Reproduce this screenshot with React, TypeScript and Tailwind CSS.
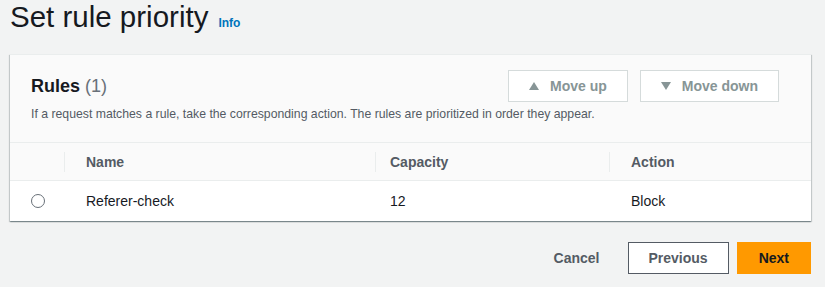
import React from "react";

const font = { fontFamily: '"Liberation Sans", Arial, sans-serif' };

function TriangleUp() {
    return (
        <svg width="10" height="8" viewBox="0 0 10 8" className="shrink-0">
            <polygon points="5,0 10,8 0,8" fill="currentColor" />
        </svg>
    );
}

function TriangleDown() {
    return (
        <svg width="10" height="8" viewBox="0 0 10 8" className="shrink-0">
            <polygon points="0,0 10,0 5,8" fill="currentColor" />
        </svg>
    );
}

function DisabledButton({ icon, label }: { icon: React.ReactNode; label: string }) {
    return (
        <button
            disabled
            className="flex h-8 items-center gap-[11px] border border-[#d5dbdb] bg-white px-[20px] text-sm font-bold leading-[18px] text-[#879596]"
        >
            {icon}
            <span>{label}</span>
        </button>
    );
}

const rules = [{ name: "Referer-check", capacity: 12, action: "Block" }];

export default function App() {
    return (
        <div className="min-h-[287px] w-full bg-[#f2f3f3] pl-[10px] pr-[14px] text-[#16191f]" style={font}>
            <div className="flex items-baseline">
                <h1 className="text-[29.5px] font-normal leading-[34px] text-[#16191f]">Set rule priority</h1>
                <a className="ml-[10px] text-xs font-bold text-[#0073bb]">Info</a>
            </div>

            <div className="mt-[20px] border-t border-[#eaeded] bg-white shadow-[0_1px_1px_0_rgba(0,28,36,0.3),1px_1px_1px_0_rgba(0,28,36,0.15),-1px_1px_1px_0_rgba(0,28,36,0.15)]">
                <div className="border-b border-[#eaeded] bg-[#fafafa] pb-[20px] pl-[21px] pr-[32px] pt-[15px]">
                    <div className="flex items-center justify-between">
                        <h2 className="text-lg font-bold leading-[22px]">
                            Rules <span className="font-normal text-[#687078]">(1)</span>
                        </h2>
                        <div className="flex gap-3">
                            <DisabledButton icon={<TriangleUp />} label="Move up" />
                            <DisabledButton icon={<TriangleDown />} label="Move down" />
                        </div>
                    </div>
                    <p className="mt-[4px] text-[12.25px] leading-4 text-[#545b64]">
                        If a request matches a rule, take the corresponding action. The rules are prioritized in order they appear.
                    </p>
                </div>

                <div className="grid grid-cols-[54px_311px_234px_1fr]">
                    <div className="h-[38px] border-b border-[#eaeded] bg-[#fafafa]" />
                    {["Name", "Capacity", "Action"].map((h, i) => (
                        <div
                            key={h}
                            className="flex h-[38px] items-center border-b border-[#eaeded] bg-[#fafafa] text-sm font-bold text-[#545b64]"
                        >
                            <div className="h-5 w-px bg-[#eaeded]" />
                            <span className={i === 1 ? "pl-[14px]" : "pl-[21px]"}>{h}</span>
                        </div>
                    ))}
                    {rules.map((r) => (
                        <React.Fragment key={r.name}>
                            <div className="flex h-[40px] items-center pl-[21px]">
                                <span className="block h-[14px] w-[14px] rounded-full border border-[#687078] bg-white" />
                            </div>
                            <div className="flex h-[40px] items-center pl-[22px] text-sm">{r.name}</div>
                            <div className="flex h-[40px] items-center pl-[15px] text-sm">{r.capacity}</div>
                            <div className="flex h-[40px] items-center pl-[22px] text-sm">{r.action}</div>
                        </React.Fragment>
                    ))}
                </div>
            </div>

            <div className="mt-[21px] flex justify-end gap-2">
                <button className="h-8 px-[20px] text-sm font-bold text-[#545b64]">Cancel</button>
                <button className="h-8 border border-[#545b64] bg-white px-[20px] text-sm font-bold text-[#545b64]">
                    Previous
                </button>
                <button className="h-8 border border-[#ff9900] bg-[#ff9900] px-[21px] text-sm font-bold text-[#16191f]">
                    Next
                </button>
            </div>
        </div>
    );
}
